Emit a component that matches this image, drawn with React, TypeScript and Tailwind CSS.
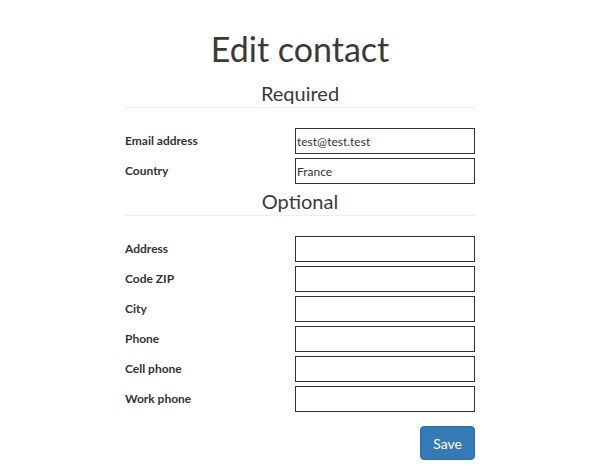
import React from 'react';

const requiredFields = [
    { label: 'Email address', value: 'test@test.test' },
    { label: 'Country', value: 'France' },
];

const optionalFields = ['Address', 'Code ZIP', 'City', 'Phone', 'Cell phone', 'Work phone'];

const Field = ({ label, value }: { label: string; value?: string }) => (
    <div className="flex items-center justify-between h-[26px] mb-[4px]">
        <label className="text-[12px] font-bold text-[#333]">{label}</label>
        <input
            type="text"
            defaultValue={value}
            className="w-[180px] h-[26px] border border-[#333] px-[1px] text-[12px] text-[#333] outline-none"
        />
    </div>
);

const App = () => {
    return (
        <div className="w-[600px] min-h-[474px] bg-white text-[#333]" style={{ fontFamily: 'Lato, "Open Sans", sans-serif' }}>
            <div className="w-[350px] mx-auto pt-[29px]">
                <h1 className="text-center text-[34px] leading-[40px] text-[#3a3a3a]">Edit contact</h1>
                <h3 className="text-center text-[20px] leading-[26px] mt-[11px] text-[#3a3a3a]">Required</h3>
                <hr className="border-t border-[#eee] mt-[1px] mb-[20px]" />
                {requiredFields.map((f) => (
                    <Field key={f.label} label={f.label} value={f.value} />
                ))}
                <h3 className="text-center text-[20px] leading-[26px] text-[#3a3a3a]">Optional</h3>
                <hr className="border-t border-[#eee] mt-[1px] mb-[20px]" />
                {optionalFields.map((l) => (
                    <Field key={l} label={l} />
                ))}
                <div className="flex justify-end mt-[14px]">
                    <button className="bg-[#337ab7] border border-[#2e6da4] rounded-[4px] text-white text-[14px] h-[34px] px-[12px]">
                        Save
                    </button>
                </div>
            </div>
        </div>
    );
};

export default App;
